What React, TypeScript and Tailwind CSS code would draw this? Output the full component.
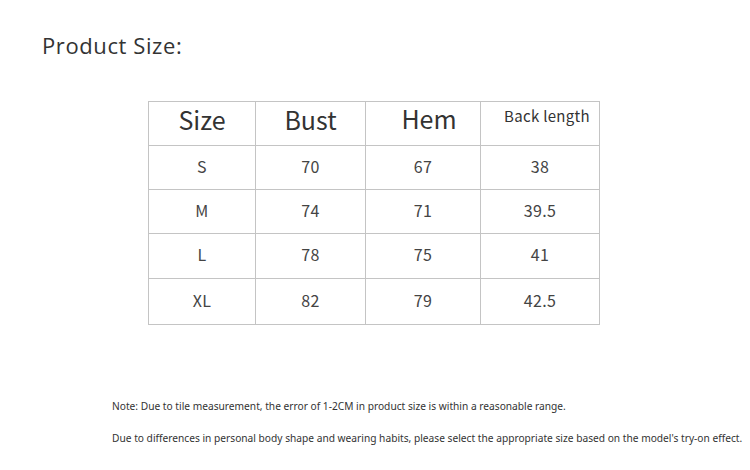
import React from 'react';

const rows = [
    ['S', '70', '67', '38'],
    ['M', '74', '71', '39.5'],
    ['L', '78', '75', '41'],
    ['XL', '82', '79', '42.5'],
];

const cols = ['w-[107px]', 'w-[110px]', 'w-[115px]', 'w-[118px]'];
const heights = ['h-[44px]', 'h-[44px]', 'h-[45px]', 'h-[45px]'];

export default function App() {
    return (
        <div className="w-[750px] h-[470px] bg-white text-[#333] overflow-hidden relative" style={{ fontFamily: '"Noto Sans CJK SC", "Noto Sans", sans-serif' }}>
            <h1 className="pl-[42px] pt-[29px] text-[22px] leading-[32px] text-[#333] tracking-[0.6px]" style={{ fontFamily: '"Open Sans", sans-serif' }}>
                Product Size:
            </h1>

            {/* size table */}
            <div className="ml-[148px] mt-[40px] w-[452px] border border-[#c4c4c4]">
                <div className="flex h-[44px] border-b border-[#c4c4c4]">
                    <div className={`${cols[0]} border-r border-[#c4c4c4] flex justify-center text-[25px] leading-[34px]`}>Size</div>
                    <div className={`${cols[1]} border-r border-[#c4c4c4] flex justify-center text-[25px] leading-[34px]`}>Bust</div>
                    <div className={`${cols[2]} border-r border-[#c4c4c4] flex justify-center pl-[12px] text-[25px] leading-[32px]`}>Hem</div>
                    <div className={`${cols[3]} flex justify-center pt-[3px] pl-[14px] text-[15px] leading-[22px] tracking-[0.3px]`}>Back length</div>
                </div>
                {rows.map((r, i) => (
                    <div key={i} className={`flex ${heights[i]} ${i < rows.length - 1 ? 'border-b border-[#c4c4c4]' : ''}`}>
                        {r.map((c, j) => (
                            <div
                                key={j}
                                className={`${cols[j]} ${j < 3 ? 'border-r border-[#c4c4c4]' : ''} flex items-center justify-center pb-[4px] text-[16px] text-[#444] tracking-[0.3px]`}
                            >
                                {c}
                            </div>
                        ))}
                    </div>
                ))}
            </div>

            {/* notes */}
            <div className="pl-[112px] mt-[74px] text-[10.2px] text-[#333]" style={{ fontFamily: '"Noto Sans", sans-serif' }}>
                <p className="leading-[14px]">Note: Due to tile measurement, the error of 1-2CM in product size is within a reasonable range.</p>
                <p className="leading-[14px] mt-[18px] whitespace-nowrap">Due to differences in personal body shape and wearing habits, please select the appropriate size based on the model's try-on effect.</p>
            </div>
        </div>
    );
}
